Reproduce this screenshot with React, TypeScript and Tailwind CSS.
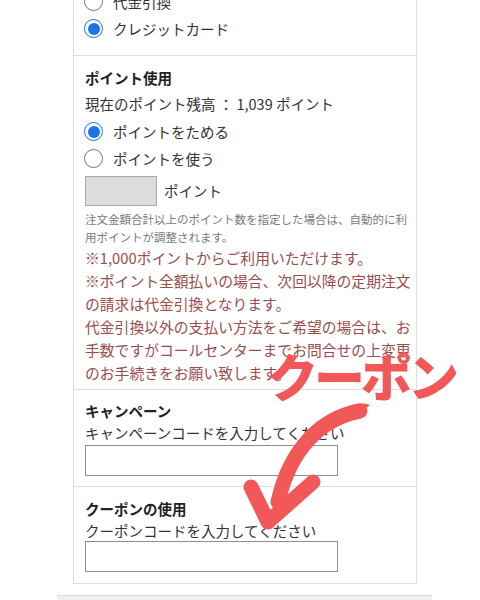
import React from "react";

const font = { fontFamily: '"Noto Sans CJK JP", "Noto Sans", sans-serif' };

function Radio({ checked, label }: { checked?: boolean; label: string }) {
  return (
    <div className="flex h-[27px] items-center">
      {checked ? (
        <span className="flex h-[19px] w-[19px] items-center justify-center rounded-full border-[1.5px] border-[#1a73e8] bg-white">
          <span className="h-[12px] w-[12px] rounded-full bg-[#1a73e8]" />
        </span>
      ) : (
        <span className="h-[19px] w-[19px] rounded-full border border-[#767676] bg-white" />
      )}
      <span className="ml-[10px] text-[14.5px] text-[#333]">{label}</span>
    </div>
  );
}

function Arrow() {
  return (
    <svg className="pointer-events-none absolute left-0 top-0" width="480" height="600" viewBox="0 0 480 600">
      <path
        d="M 360 411 C 322 418 290 448 278 502"
        fill="none"
        stroke="#f25858"
        strokeWidth="15"
        strokeLinecap="round"
      />
      <path d="M 370 405 C 362 402 352 404 344 408 L 352 419 Z" fill="#f25858" />
      <path
        d="M 251 487 L 268 522 L 313 482"
        fill="none"
        stroke="#f25858"
        strokeWidth="15"
        strokeLinecap="round"
        strokeLinejoin="round"
      />
    </svg>
  );
}

export default function App() {
  return (
    <div className="relative h-[600px] w-[480px] overflow-hidden bg-white" style={font}>
      <div className="ml-[73px] -mt-[12px] w-[344px] border-x border-b border-[#dedede]">
        {/* 支払い方法 */}
        <section className="border-b border-[#dedede] px-[10px] pb-[13px]">
          <Radio label="代金引換" />
          <Radio checked label="クレジットカード" />
        </section>

        {/* ポイント使用 */}
        <section className="border-b border-[#dedede] pl-[11px] pr-[1px] pt-[10px] pb-[5px]">
          <div className="flex h-[24px] items-center text-[14.5px] font-bold text-[#222]">ポイント使用</div>
          <div className="flex h-[28px] items-center text-[14.5px] text-[#333]">
            現在のポイント残高 ： 1,039 ポイント
          </div>
          <div className="-ml-[1px]">
            <Radio checked label="ポイントをためる" />
            <Radio label="ポイントを使う" />
          </div>
          <div className="mt-[4px] flex h-[30px] items-center">
            <div className="h-[30px] w-[72px] border border-[#a9a9a9] bg-[#dcdcdc]" />
            <span className="ml-[7px] text-[14.5px] text-[#333]">ポイント</span>
          </div>
          <p className="mt-[4px] text-[11.5px] leading-[18px] text-[#7a7a7a]">
            注文金額合計以上のポイント数を指定した場合は、自動的に利用ポイントが調整されます。
          </p>
          <div className="text-[14.8px] leading-[23px] text-[#9c4c4a]">
            <p>※1,000ポイントからご利用いただけます。</p>
            <p>※ポイント全額払いの場合、次回以降の定期注文の請求は代金引換となります。</p>
            <p>代金引換以外の支払い方法をご希望の場合は、お手数ですがコールセンターまでお問合せの上変更のお手続きをお願い致します。</p>
          </div>
        </section>

        {/* キャンペーン */}
        <section className="border-b border-[#dedede] px-[11px] pt-[10px] pb-[10px]">
          <div className="flex h-[22px] items-center text-[14.5px] font-bold text-[#222]">キャンペーン</div>
          <div className="flex h-[22px] items-center text-[14.5px] text-[#333]">キャンペーンコードを入力してください</div>
          <div className="mt-[1px] h-[31px] w-[253px] border border-[#8f8f8f] bg-white" />
        </section>

        {/* クーポン */}
        <section className="px-[11px] pt-[11px] pb-[11px]">
          <div className="flex h-[22px] items-center text-[14.5px] font-bold text-[#222]">クーポンの使用</div>
          <div className="flex h-[21px] items-center text-[14.5px] text-[#333]">クーポンコードを入力してください</div>
          <div className="h-[31px] w-[253px] border border-[#8f8f8f] bg-white" />
        </section>
      </div>

      <div className="ml-[57px] mt-[11px] h-[12px] w-[375px] border-t border-[#dcdcdc] bg-[#f1f1f1]" />

      <Arrow />
      <div className="absolute left-[267px] top-[350px] text-[51px] font-black leading-none tracking-[-4px] text-[#f25858]">
        クーポン
      </div>
    </div>
  );
}
